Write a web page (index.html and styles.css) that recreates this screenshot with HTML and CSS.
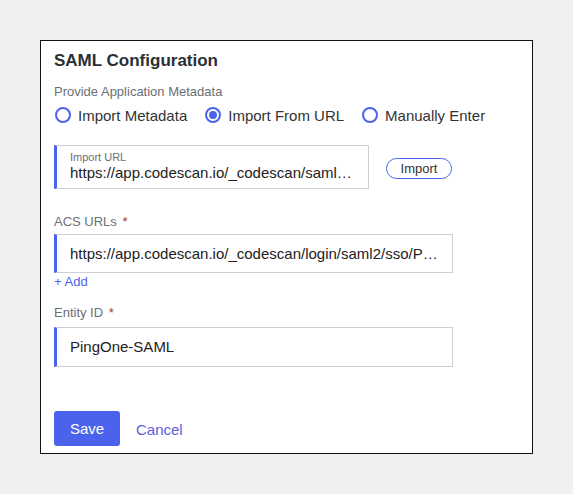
FILE: index.html
```html
<!DOCTYPE html>
<html>
<head>
<meta charset="utf-8">
<link rel="stylesheet" href="styles.css">
</head>
<body>
<div class="card">
  <h1 class="title">SAML Configuration</h1>
  <div class="label label-provide">Provide Application Metadata</div>
  <div class="radios">
    <label class="radio"><span class="circle"></span>Import Metadata</label>
    <label class="radio"><span class="circle checked"></span>Import From URL</label>
    <label class="radio"><span class="circle"></span>Manually Enter</label>
  </div>
  <div class="import-row">
    <div class="field url-field">
      <div class="small-label">Import URL</div>
      <div class="value ellipsis">https://app.codescan.io/_codescan/saml2/metadata/PingOne-SAML</div>
    </div>
    <button class="import-btn">Import</button>
  </div>
  <div class="label label-acs">ACS URLs <span class="req">*</span></div>
  <div class="field input acs-input"><div class="value ellipsis">https://app.codescan.io/_codescan/login/saml2/sso/PingOne-SAML</div></div>
  <div class="add">+ Add</div>
  <div class="label label-entity">Entity ID <span class="req">*</span></div>
  <div class="field input entity-input"><div class="value">PingOne-SAML</div></div>
  <div class="actions">
    <button class="save">Save</button>
    <span class="cancel">Cancel</span>
  </div>
</div>
</body>
</html>
```
FILE: styles.css
```css
html, body {
  margin: 0;
  padding: 0;
  background: #f0f0f0;
  font-family: "Liberation Sans", Arial, sans-serif;
}
.card {
  box-sizing: border-box;
  margin: 40px 0 0 40px;
  width: 493px;
  height: 414px;
  background: #fff;
  border: 1px solid #111;
  padding: 10px 13px;
}
.title {
  margin: 0;
  font-size: 17px;
  line-height: 20px;
  font-weight: bold;
  color: #2b2f36;
}
.label {
  font-size: 13px;
  line-height: 16px;
  color: #6b6f76;
}
.label-provide { margin-top: 13px; }
.radios {
  display: flex;
  align-items: center;
  height: 22px;
  margin-top: 4px;
  gap: 17px;
}
.radio {
  display: flex;
  align-items: center;
  font-size: 15px;
  color: #333;
}
.circle {
  box-sizing: border-box;
  width: 16px;
  height: 16px;
  border: 2px solid #4b63ec;
  border-radius: 50%;
  margin: 0 7px 0 1px;
  position: relative;
}
.circle.checked::after {
  content: "";
  position: absolute;
  left: 2px;
  top: 2px;
  width: 8px;
  height: 8px;
  border-radius: 50%;
  background: #4b63ec;
}
.import-row {
  display: flex;
  align-items: center;
  margin-top: 19px;
}
.field {
  box-sizing: border-box;
  border: 1px solid #cdcfd4;
  border-left: 3px solid #4b63ec;
  padding-left: 13px;
  padding-right: 14px;
}
.url-field {
  width: 315px;
  height: 44px;
  padding-top: 5px;
}
.small-label {
  font-size: 11px;
  line-height: 13px;
  color: #6b6f76;
}
.value {
  font-size: 15px;
  line-height: 18px;
  color: #222;
}
.ellipsis {
  white-space: nowrap;
  overflow: hidden;
  text-overflow: ellipsis;
}
.import-btn {
  margin-left: 17px;
  margin-top: 2px;
  width: 66px;
  height: 21px;
  line-height: 19px;
  border: 1px solid #4b63ec;
  border-radius: 11px;
  background: #fff;
  font-family: inherit;
  font-size: 13px;
  color: #333;
  padding: 0;
}
.label-acs { margin-top: 25px; }
.req { color: #a33a3a; margin-left: 2px; }
.input {
  width: 399px;
  display: flex;
  align-items: center;
}
.acs-input { height: 39px; margin-top: 4px; }
.add {
  margin-top: 1px;
  font-size: 13px;
  line-height: 16px;
  color: #4b63ec;
}
.label-entity { margin-top: 15px; }
.entity-input { height: 40px; margin-top: 6px; }
.actions {
  display: flex;
  align-items: center;
  margin-top: 44px;
}
.save {
  width: 66px;
  height: 35px;
  border: none;
  border-radius: 3px;
  background: #4b63ec;
  color: #fff;
  font-family: inherit;
  font-size: 15px;
  padding: 0;
}
.cancel {
  margin-left: 16px;
  font-size: 15px;
  color: #5a5fe0;
  margin-top: 1px;
}
```
